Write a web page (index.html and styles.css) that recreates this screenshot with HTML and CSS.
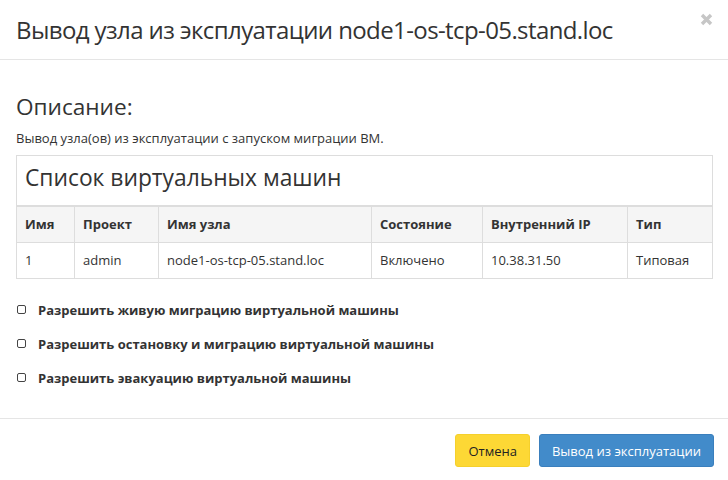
FILE: index.html
```html
<!DOCTYPE html>
<html lang="ru">
<head>
    <meta charset="UTF-8">
    <title>Вывод узла из эксплуатации</title>
    <link rel="stylesheet" href="styles.css">
</head>
<body>
    <div class="modal">
        <div class="modal-header">
            <h4 class="modal-title">Вывод узла из эксплуатации node1-os-tcp-05.stand.loc</h4>
            <svg class="close" width="13" height="13" viewBox="0 0 13 13">
                <path d="M2 2 L11 11 M11 2 L2 11" stroke="#c6c6c6" stroke-width="3.4" stroke-linecap="butt"/>
            </svg>
        </div>
        <div class="modal-body">
            <h3 class="desc-title">Описание:</h3>
            <p class="desc">Вывод узла(ов) из эксплуатации с запуском миграции ВМ.</p>
            <div class="panel">
                <div class="panel-heading">Список виртуальных машин</div>
                <table class="vm-table">
                    <thead>
                        <tr>
                            <th class="c-name">Имя</th>
                            <th class="c-proj">Проект</th>
                            <th class="c-node">Имя узла</th>
                            <th class="c-state">Состояние</th>
                            <th class="c-ip">Внутренний IP</th>
                            <th class="c-type">Тип</th>
                        </tr>
                    </thead>
                    <tbody>
                        <tr>
                            <td>1</td>
                            <td>admin</td>
                            <td>node1-os-tcp-05.stand.loc</td>
                            <td>Включено</td>
                            <td>10.38.31.50</td>
                            <td>Типовая</td>
                        </tr>
                    </tbody>
                </table>
            </div>
            <ul class="options">
                <li><span class="box"></span><label>Разрешить живую миграцию виртуальной машины</label></li>
                <li><span class="box"></span><label>Разрешить остановку и миграцию виртуальной машины</label></li>
                <li><span class="box"></span><label>Разрешить эвакуацию виртуальной машины</label></li>
            </ul>
        </div>
        <div class="modal-footer">
            <button class="btn btn-cancel">Отмена</button>
            <button class="btn btn-primary">Вывод из эксплуатации</button>
        </div>
    </div>
</body>
</html>
```

FILE: styles.css
```css
body,h3,h4,p,ul,li{
    margin: 0;
    padding: 0;
    list-style: none;
}
body{
    background: #fff;
    font-family: "Open Sans", "Noto Sans", sans-serif;
    color: #333;
    font-size: 13px;
}
.modal{
    width: 728px;
}
.modal-header{
    display: flex;
    justify-content: space-between;
    align-items: flex-start;
    padding: 15px 15px 14px 16px;
    border-bottom: 1px solid #e5e5e5;
}
.modal-title{
    font-size: 24px;
    font-weight: normal;
    line-height: 30px;
    letter-spacing: -0.6px;
    color: #333;
}
.close{
    margin-top: -2px;
    margin-right: 0;
}
.modal-body{
    padding: 15px 15px 16px 16px;
}
.desc-title{
    font-size: 22.6px;
    font-weight: normal;
    line-height: 28px;
    margin-top: 18px;
}
.desc{
    margin-top: 9px;
    line-height: 16px;
}
.panel{
    margin-top: 9px;
    border: 1px solid #ddd;
}
.panel-heading{
    font-size: 22.8px;
    line-height: 28px;
    padding: 8px 8px 13px 8px;
    border-bottom: 2px solid #ddd;
}
.vm-table{
    width: 100%;
    border-collapse: collapse;
    table-layout: fixed;
}
.vm-table th,
.vm-table td{
    text-align: left;
    padding: 8px 8px;
    line-height: 19px;
    border-left: 1px solid #ddd;
    white-space: nowrap;
}
.vm-table th:first-child,
.vm-table td:first-child{
    border-left: none;
}
.vm-table th{
    background: #f5f5f5;
    font-weight: bold;
    border-bottom: 1px solid #ddd;
}
.c-name{ width: 41px; }
.c-proj{ width: 67px; }
.c-node{ width: 196px; }
.c-state{ width: 94px; }
.c-ip{ width: 128px; }
.options{
    margin-top: 22px;
}
.options li{
    display: flex;
    align-items: center;
    height: 17px;
    margin-bottom: 17px;
}
.options li:last-child{
    margin-bottom: 0;
}
.box{
    width: 7px;
    height: 7px;
    border: 1px solid #444;
    border-radius: 2px;
    margin-left: 1px;
    margin-right: 12px;
}
.options label{
    font-weight: bold;
    font-size: 13px;
}
.modal-footer{
    display: flex;
    justify-content: flex-end;
    gap: 9px;
    padding: 15px 14px 15px 15px;
    border-top: 1px solid #e5e5e5;
    margin-top: 16px;
}
.btn{
    font-family: "Open Sans", "Noto Sans", sans-serif;
    font-size: 13px;
    height: 33px;
    padding: 0 12px;
    border-radius: 3px;
    border: 1px solid transparent;
}
.btn-cancel{
    background: #fdd835;
    border-color: #f5d02c;
    color: #222;
}
.btn-primary{
    background: #428bca;
    border-color: #3a7fbd;
    color: #fff;
}
```
